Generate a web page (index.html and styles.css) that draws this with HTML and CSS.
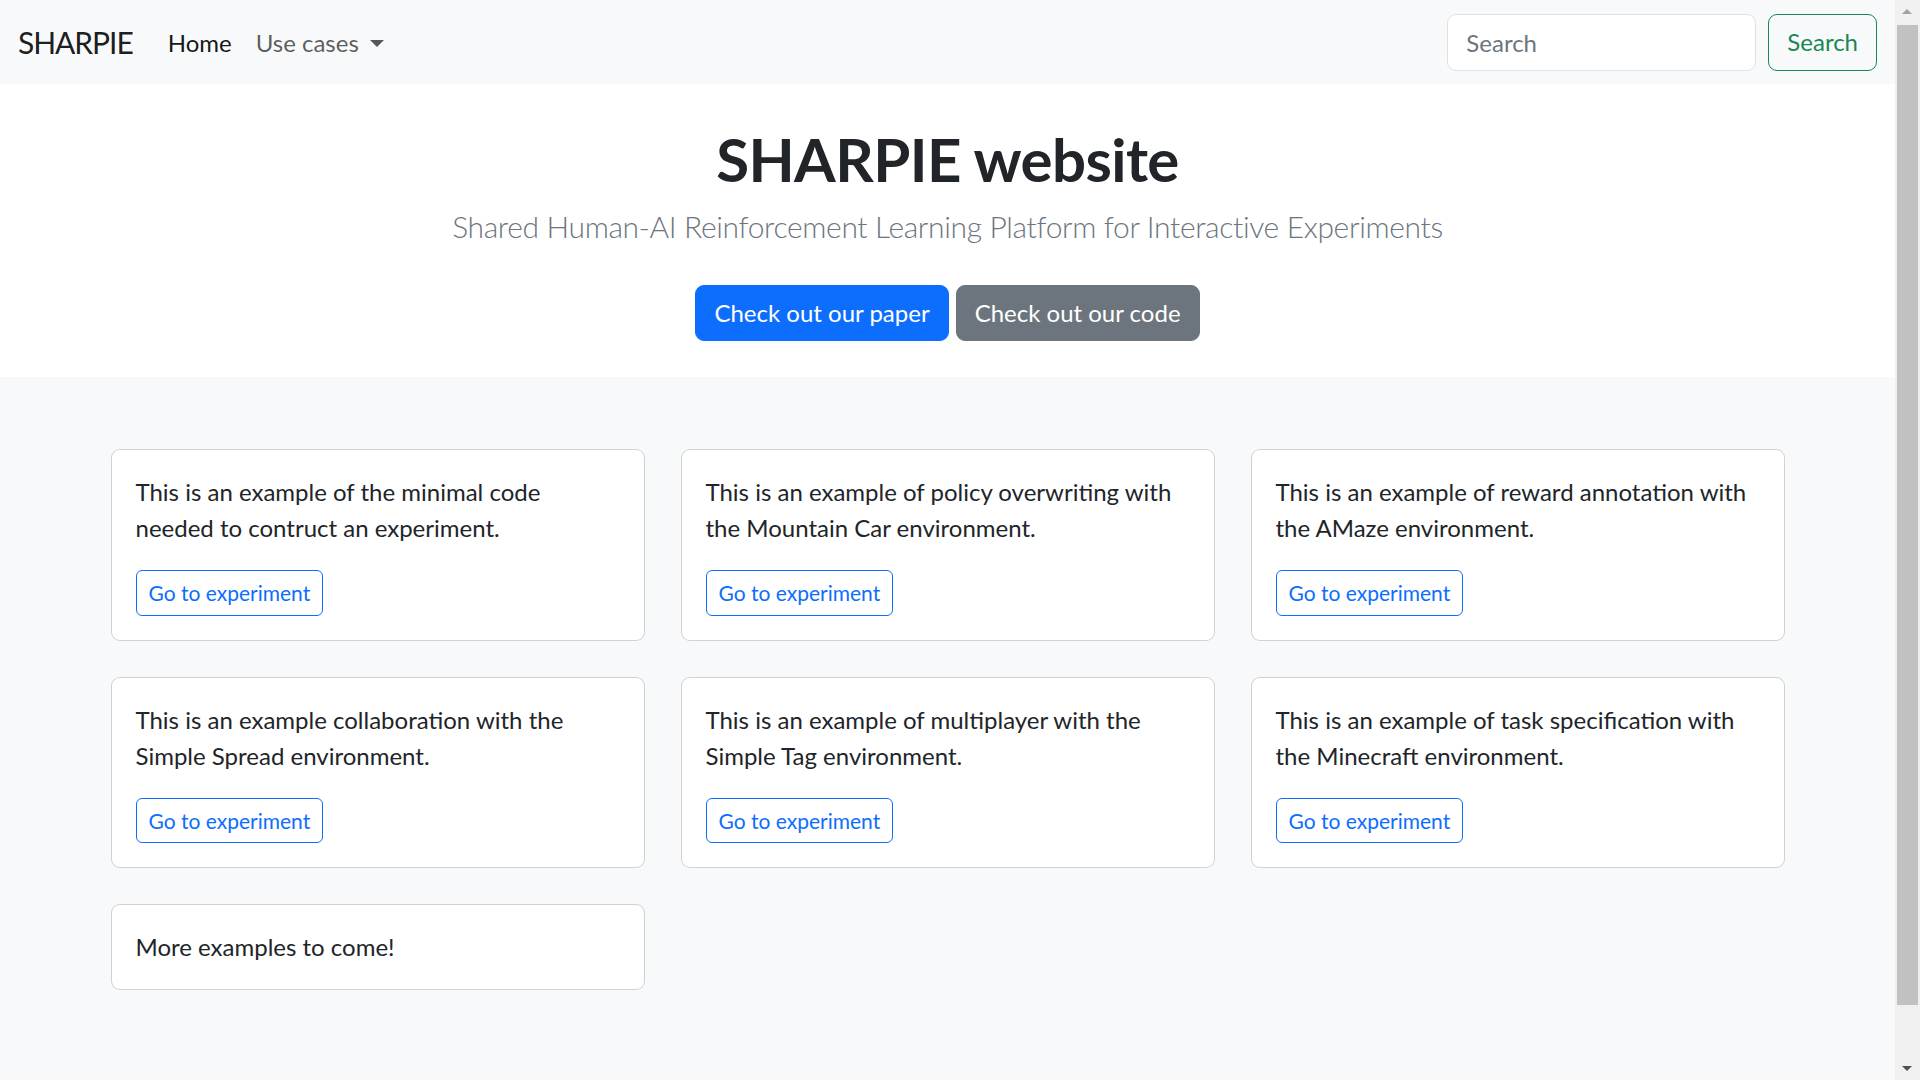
FILE: index.html
```html
<!DOCTYPE html>
<html lang="en">
<head>
<meta charset="utf-8">
<title>SHARPIE website</title>
<link rel="stylesheet" href="styles.css">
</head>
<body>
<div class="page">
  <nav class="navbar">
    <a class="brand" href="#">SHARPIE</a>
    <ul class="nav">
      <li><a class="nav-link active" href="#">Home</a></li>
      <li><a class="nav-link dropdown" href="#">Use cases<span class="caret"></span></a></li>
    </ul>
    <form class="search">
      <input class="search-input" type="search" placeholder="Search">
      <button class="btn btn-outline-success" type="button">Search</button>
    </form>
  </nav>

  <header class="hero">
    <h1 class="hero-title">SHARPIE website</h1>
    <p class="lead">Shared Human-AI Reinforcement Learning Platform for Interactive Experiments</p>
    <div class="hero-actions">
      <a class="btn btn-primary" href="#">Check out our paper</a>
      <a class="btn btn-secondary" href="#">Check out our code</a>
    </div>
  </header>

  <main class="examples">
    <div class="container">
      <div class="grid">
        <div class="card">
          <p class="card-text">This is an example of the minimal code needed to contruct an experiment.</p>
          <a class="btn-sm btn-outline-primary" href="#">Go to experiment</a>
        </div>
        <div class="card">
          <p class="card-text">This is an example of policy overwriting with the Mountain Car environment.</p>
          <a class="btn-sm btn-outline-primary" href="#">Go to experiment</a>
        </div>
        <div class="card">
          <p class="card-text">This is an example of reward annotation with the AMaze environment.</p>
          <a class="btn-sm btn-outline-primary" href="#">Go to experiment</a>
        </div>
        <div class="card">
          <p class="card-text">This is an example collaboration with the Simple Spread environment.</p>
          <a class="btn-sm btn-outline-primary" href="#">Go to experiment</a>
        </div>
        <div class="card">
          <p class="card-text">This is an example of multiplayer with the Simple Tag environment.</p>
          <a class="btn-sm btn-outline-primary" href="#">Go to experiment</a>
        </div>
        <div class="card">
          <p class="card-text">This is an example of task specification with the Minecraft environment.</p>
          <a class="btn-sm btn-outline-primary" href="#">Go to experiment</a>
        </div>
        <div class="card">
          <p class="card-text last">More examples to come!</p>
        </div>
      </div>
    </div>
  </main>
</div>
<div class="scrollbar">
  <span class="arrow-up"></span>
  <span class="thumb"></span>
  <span class="arrow-down"></span>
</div>
</body>
</html>
```
FILE: styles.css
```css
* { box-sizing: border-box; }
html, body { margin: 0; padding: 0; overflow: hidden; }
body {
  font-family: Lato, "Noto Sans", sans-serif;
  font-size: 24px;
  line-height: 1.5;
  color: #212529;
  background: #f8f9fa;
  padding-right: 25px;
}
a { text-decoration: none; }

/* navbar */
.navbar {
  display: flex;
  align-items: center;
  height: 84px;
  padding: 1px 18px 0;
  background: #f8f9fa;
}
.brand {
  font-size: 30px;
  line-height: 45px;
  letter-spacing: -0.035em;
  color: rgba(0,0,0,.9);
  margin-right: 23px;
}
.nav { display: flex; list-style: none; margin: 0; padding: 0; }
.nav-link {
  display: block;
  padding: 12px;
  line-height: 36px;
  color: rgba(0,0,0,.65);
}
.nav-link.active { color: rgba(0,0,0,.92); }
.caret {
  display: inline-block;
  margin-left: 11px;
  vertical-align: 5px;
  border-top: 7px solid currentColor;
  border-left: 7px solid transparent;
  border-right: 7px solid transparent;
}
.search { margin-left: auto; display: flex; gap: 12px; margin-top: -1px; }
.search-input {
  width: 309px;
  height: 57px;
  padding: 9px 18px;
  font: inherit;
  color: #212529;
  background: #fff;
  border: 1px solid #dee2e6;
  border-radius: 9px;
  outline: none;
}
.search-input::placeholder { color: #6c757d; }

/* buttons */
.btn {
  display: inline-block;
  padding: 9px 18px;
  font: inherit;
  line-height: 36px;
  border: 1px solid transparent;
  border-radius: 9px;
  background: transparent;
}
.btn-outline-success { color: #198754; border-color: #198754; }
.btn-primary { color: #fff; background: #0d6efd; border-color: #0d6efd; }
.btn-secondary { color: #fff; background: #6c757d; border-color: #6c757d; }

/* hero */
.hero {
  background: #fff;
  text-align: center;
  padding: 36px 0;
}
.hero-title {
  margin: 0 0 9px;
  padding-top: 3px;
  font-size: 60px;
  line-height: 72px;
  font-weight: 700;
  letter-spacing: -0.01em;
}
.lead {
  margin: 0 0 36px;
  font-size: 30px;
  line-height: 45px;
  font-weight: 300;
  letter-spacing: -0.012em;
  color: #6c757d;
}
.hero-actions { display: flex; justify-content: center; gap: 7px; }

/* examples */
.examples { padding: 72px 0 92px; }
.container { width: 1710px; margin: 0 auto; padding: 0 18px; }
.grid {
  display: grid;
  grid-template-columns: repeat(3, 1fr);
  gap: 36px;
  align-items: start;
}
.card {
  background: #fff;
  border: 1px solid rgba(0,0,0,.175);
  border-radius: 9px;
  padding: 24px;
}
.card-text { margin: 0 0 24px; }
.card-text.last { margin: 0; }
.btn-sm {
  display: inline-block;
  padding: 6px 12px;
  font-size: 21px;
  line-height: 31.5px;
  border: 1px solid;
  border-radius: 6px;
}
.btn-outline-primary { color: #0d6efd; border-color: #0d6efd; }

/* fake browser scrollbar */
.scrollbar {
  position: fixed;
  top: 0;
  right: 0;
  width: 25px;
  height: 100vh;
  background: #f0f0f0;
}
.thumb {
  position: absolute;
  top: 25px;
  left: 2px;
  right: 2px;
  height: 980px;
  background: #c1c1c1;
}
.arrow-up, .arrow-down {
  position: absolute;
  left: 7px;
  border-left: 5px solid transparent;
  border-right: 5px solid transparent;
}
.arrow-up { top: 9px; border-bottom: 5px solid #a3a3a3; }
.arrow-down { bottom: 9px; border-top: 5px solid #505050; }
```
